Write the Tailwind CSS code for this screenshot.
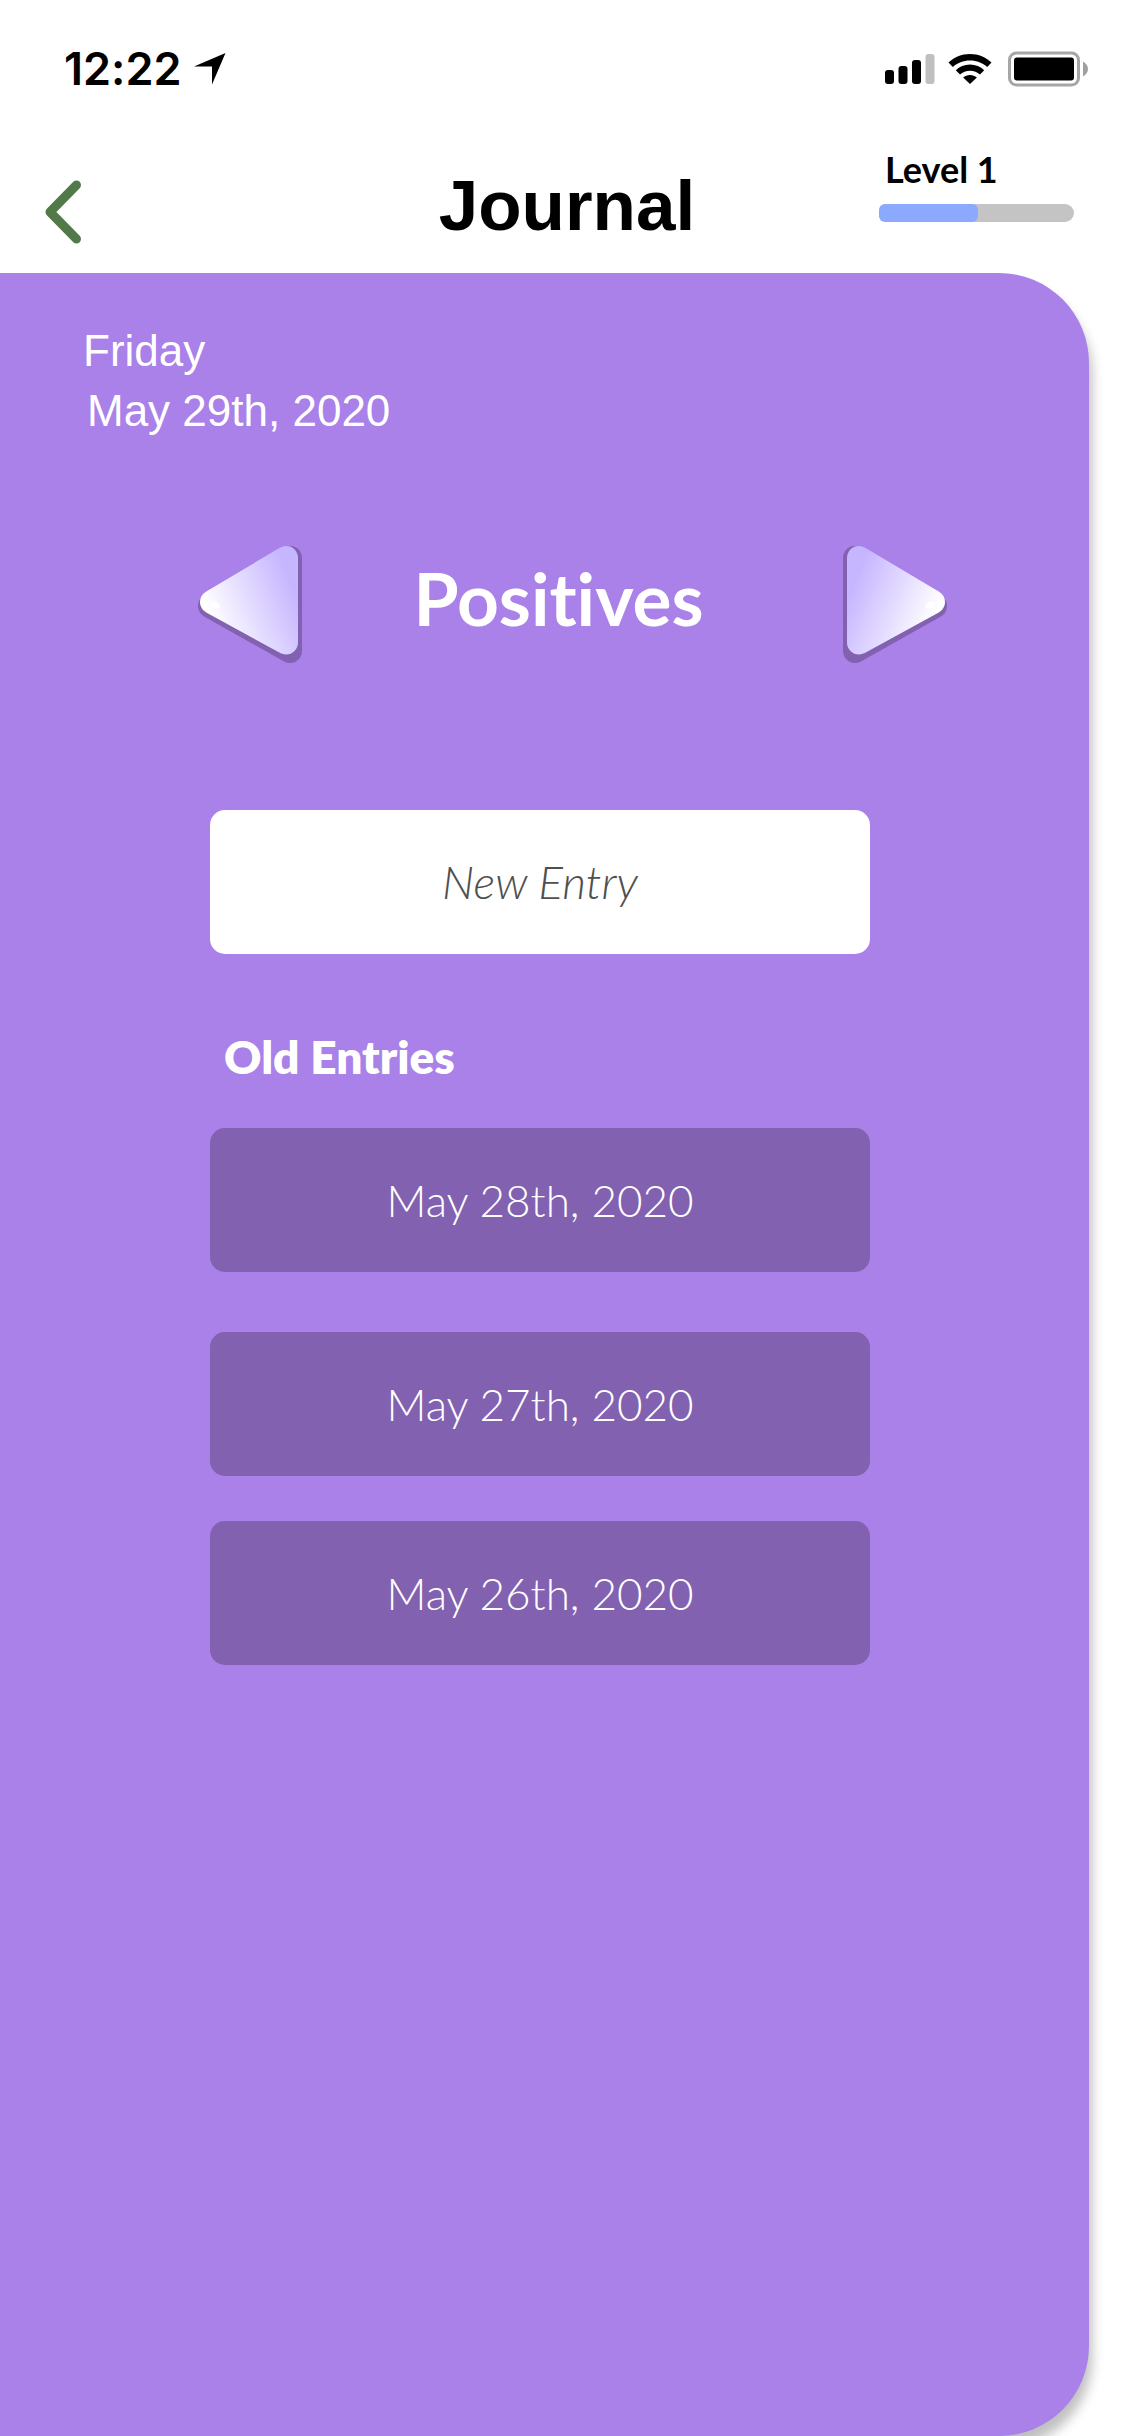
<!DOCTYPE html>
<html lang="en">
<head>
<meta charset="utf-8">
<meta name="viewport" content="width=device-width, initial-scale=1">
<title>Journal</title>
<script src="https://cdn.jsdelivr.net/npm/@tailwindcss/browser@4"></script>
</head>
<body class="flex min-h-screen flex-col bg-white font-['Lato',sans-serif] text-black [font-variant-ligatures:none]">

<!-- Status bar -->
<div class="flex h-[138px] items-center justify-between pl-16 pr-9">
  <div class="flex items-center gap-3">
    <span class="font-['Inter',sans-serif] text-[45px] leading-[54px] font-semibold">12:22</span>
    <svg class="h-8 w-8" viewBox="0 0 32 32" aria-hidden="true"><path d="M0 13.500 31.500 0 18 31.500V13.500Z"/></svg>
  </div>
  <div class="flex items-center gap-3">
    <svg class="h-[30px] w-[51px]" viewBox="0 0 51 30" aria-hidden="true">
      <rect x="0" y="16" width="9" height="14" rx="3"/>
      <rect x="13.500" y="12" width="9" height="18" rx="3"/>
      <rect x="27" y="6" width="9" height="24" rx="3"/>
      <rect x="40.500" y="0" width="9" height="30" rx="3" fill="#bfbfbf"/>
    </svg>
    <svg class="h-[30px] w-11" viewBox="0 0 44 30" aria-hidden="true">
      <path d="M22 0C30.500 0 38 3.200 43.500 8.600L39.200 13C34.700 8.800 28.700 6.400 22 6.400S9.300 8.800 4.800 13L.5 8.600C6 3.200 13.500 0 22 0Z"/>
      <path d="M22 10.600C27.600 10.600 32.500 12.700 36.200 16.200L32 20.500C29.300 18.200 25.900 16.800 22 16.800S14.700 18.200 12 20.500L7.800 16.200C11.500 12.700 16.400 10.600 22 10.600Z"/>
      <path d="M22 21C24.600 21 27 22 28.900 23.500L22 30 15.100 23.500C17 22 19.400 21 22 21Z"/>
    </svg>
    <svg class="ml-1 h-9 w-[81px]" viewBox="0 0 81 36" aria-hidden="true">
      <rect x="1.500" y="2" width="69" height="32" rx="7" fill="none" stroke="#a6a6a6" stroke-width="3"/>
      <rect x="6" y="6.500" width="60" height="23" rx="3"/>
      <path d="M75 10.500C78 12 80 15 80 18S78 24 75 25.500Z" fill="#a0a0a0"/>
    </svg>
  </div>
</div>

<!-- Title bar -->
<header class="grid h-[135px] grid-cols-[1fr_auto_1fr] items-center pl-[45px] pr-9">
  <button type="button" aria-label="Back" class="w-9 pt-3">
    <svg class="h-16 w-9" viewBox="0 0 36 64" fill="none" stroke="#527a49" stroke-width="9" stroke-linecap="round" stroke-linejoin="round" aria-hidden="true"><path d="M31.500 5 5 32 31.500 59"/></svg>
  </button>
  <h1 class="font-['Liberation_Sans',sans-serif] text-[71px] leading-[80px] font-bold">Journal</h1>
  <div class="mr-[15px] mb-12 w-[195px] justify-self-end">
    <p id="level" class="mb-2 pl-[6px] text-[36px] leading-[54px] font-bold">Level 1</p>
    <div role="progressbar" aria-labelledby="level" aria-valuenow="51" aria-valuemin="0" aria-valuemax="100" class="h-[18px] overflow-hidden rounded-l-md rounded-r-[9px] bg-[#c4c4c4]">
      <div class="h-full rounded-md bg-[#8aa9ff]" style="width:51%"></div>
    </div>
  </div>
</header>

<!-- Journal panel -->
<main class="mr-9 flex-1 rounded-r-[90px] bg-[#a981e9] pb-24 text-white shadow-[3px_12px_12px_rgba(0,0,0,0.25)]">
  <div class="pt-12 pl-[83px] font-['Liberation_Sans',sans-serif] text-[44px] leading-[60px]">
    <p>Friday</p>
    <p class="pl-1">May 29th, 2020</p>
  </div>

  <div class="mt-[103px] grid grid-cols-[auto_1fr_auto] items-center pl-[196px] pr-[140px]">
    <button type="button" aria-label="Previous category">
      <svg class="h-[120px] w-[108px]" viewBox="196 544 108 120" stroke-width="24" stroke-linejoin="round" aria-hidden="true">
        <defs>
          <linearGradient id="shine" gradientUnits="userSpaceOnUse" x1="208" y1="612" x2="290" y2="578"><stop offset="0" stop-color="#fff"/><stop offset="1" stop-color="#c6b5ff"/></linearGradient>
        </defs>
        <path d="M290 558V651L210 606Z" fill="#8261b0" stroke="#8261b0"/>
        <path d="M286 558V642.500L212 602Z" fill="url(#shine)" stroke="url(#shine)"/>
        <ellipse cx="215.500" cy="605" rx="5" ry="3" transform="rotate(30 215.500 605)" fill="#fff"/>
      </svg>
    </button>
    <h2 class="pr-7 pb-3 text-center text-[73px] leading-[88px] font-bold">Positives</h2>
    <button type="button" aria-label="Next category">
      <svg class="h-[120px] w-[108px] -scale-x-100" viewBox="196 544 108 120" stroke-width="24" stroke-linejoin="round" aria-hidden="true">
        <path d="M290 558V651L210 606Z" fill="#8261b0" stroke="#8261b0"/>
        <path d="M286 558V642.500L212 602Z" fill="url(#shine)" stroke="url(#shine)"/>
        <ellipse cx="215.500" cy="605" rx="5" ry="3" transform="rotate(30 215.500 605)" fill="#fff"/>
      </svg>
    </button>
  </div>

  <section class="mt-[146px] flex flex-col pl-[210px] pr-[219px] text-[44px] leading-[54px]">
    <button type="button" class="h-36 rounded-[15px] bg-white text-[46px] font-light text-[#4f4f4f] italic">New Entry</button>
    <h3 class="mt-[76px] pl-[14px] text-[46px] leading-[54px] font-extrabold">Old Entries</h3>
    <ul class="mt-11 flex flex-col">
      <li><button type="button" class="h-36 w-full rounded-[15px] bg-[#8261b0] font-light">May 28th, 2020</button></li>
      <li class="mt-[60px]"><button type="button" class="h-36 w-full rounded-[15px] bg-[#8261b0] font-light">May 27th, 2020</button></li>
      <li class="mt-[45px]"><button type="button" class="h-36 w-full rounded-[15px] bg-[#8261b0] font-light">May 26th, 2020</button></li>
    </ul>
  </section>
</main>
</body>
</html>
